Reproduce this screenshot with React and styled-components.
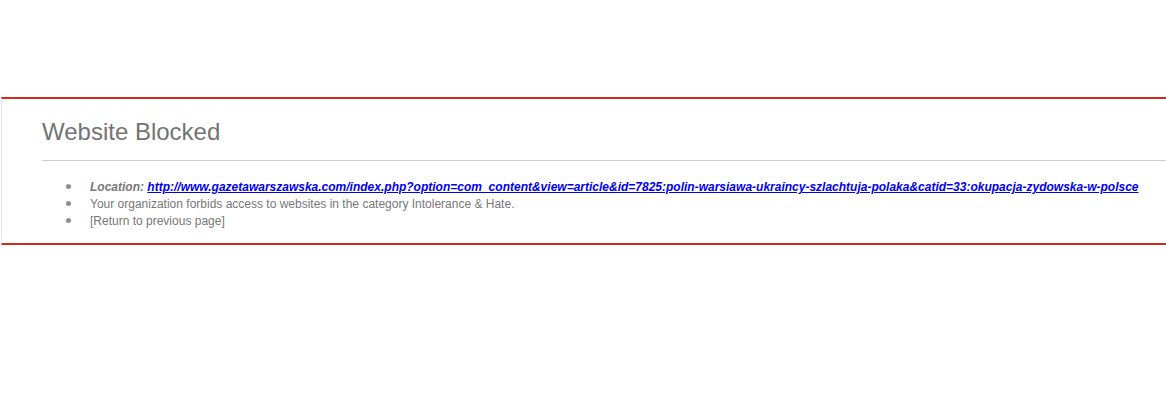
import React from "react";
import styled, { createGlobalStyle } from "styled-components";

const Global = createGlobalStyle`
  html, body { margin: 0; padding: 0; background: #fff; overflow: hidden; }
  body { font-family: "Liberation Sans", Arial, sans-serif; }
`;

const Page = styled.div`
  padding-top: 97px;
`;

const Panel = styled.div`
  margin: 0 -4px 0 1px;
  border-top: 2px solid #d42a1e;
  border-bottom: 2px solid #d42a1e;
  border-left: 1px solid #e4e4e4;
  padding: 19px 0 13px 40px;
`;

const Title = styled.h1`
  margin: 0;
  font-size: 24px;
  font-weight: normal;
  line-height: 28px;
  color: #737373;
`;

const Rule = styled.hr`
  margin: 14px 0 18px;
  border: 0;
  border-top: 1px solid #cfcfcf;
  height: 0;
`;

const List = styled.ul`
  margin: 0;
  padding-left: 24px;
  list-style: none;
`;

const Item = styled.li`
  font-size: 12px;
  line-height: 17px;
  color: #777;
  &::before {
    content: "";
    display: inline-block;
    width: 5px;
    height: 5px;
    border-radius: 50%;
    background: #8f8f8f;
    margin-right: 19px;
    vertical-align: 2px;
  }
`;

const Label = styled.b`
  font-style: italic;
`;

const Link = styled.a`
  color: #0000ee;
  font-weight: bold;
  font-style: italic;
  text-decoration: underline;
`;

const url =
  "http://www.gazetawarszawska.com/index.php?option=com_content&view=article&id=7825:polin-warsiawa-ukraincy-szlachtuja-polaka&catid=33:okupacja-zydowska-w-polsce";

export default function App() {
  return (
    <>
      <Global />
      <Page>
        <Panel>
          <Title>Website Blocked</Title>
          <Rule />
          <List>
            <Item>
              <Label>Location:</Label> <Link href="#">{url}</Link>
            </Item>
            <Item>
              Your organization forbids access to websites in the category Intolerance &amp; Hate.
            </Item>
            <Item>[Return to previous page]</Item>
          </List>
        </Panel>
      </Page>
    </>
  );
}
